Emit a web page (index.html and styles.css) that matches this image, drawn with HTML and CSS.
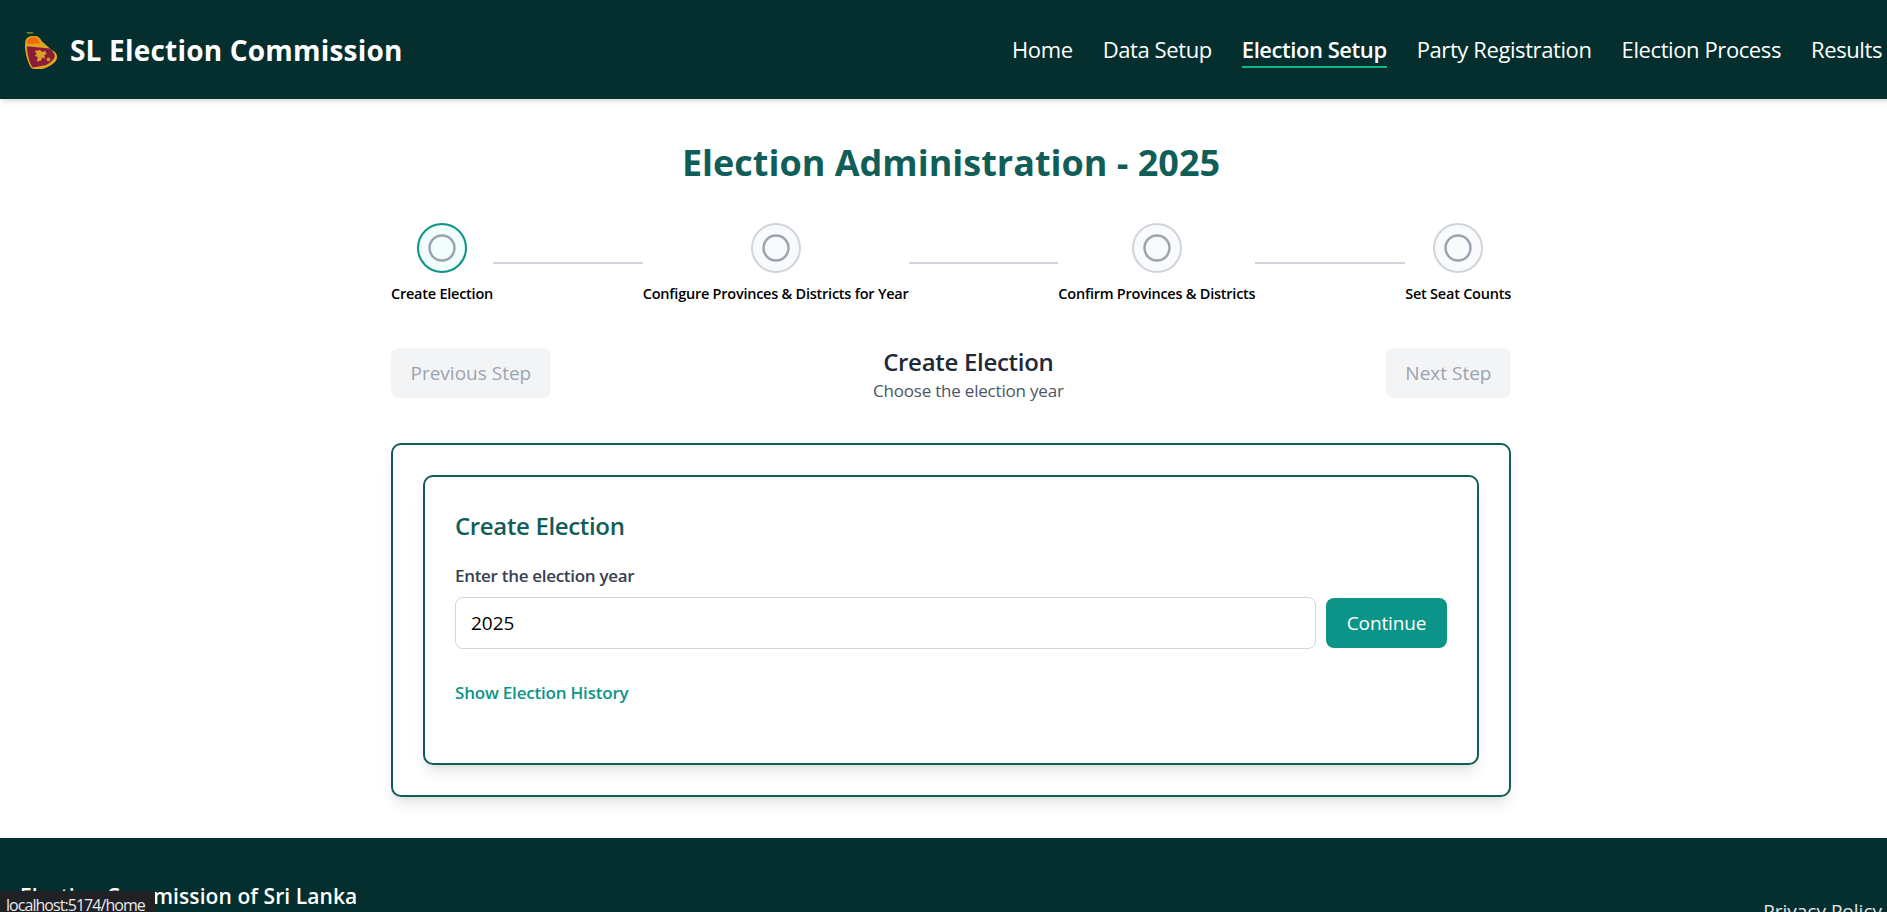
FILE: index.html
```html
<!DOCTYPE html>
<html lang="en">
<head>
<meta charset="utf-8">
<title>Election Administration - 2025</title>
<link rel="stylesheet" href="styles.css">
</head>
<body>
<div class="page">
  <header class="topbar">
    <a class="brand" href="#">
      <svg class="brand-logo" viewBox="0 0 34 36" aria-hidden="true">
        <g filter="url(#soft)">
          <path d="M4 1h7l-1 1.500H5z" fill="#6f7f2a"/>
          <path d="M3 11C3 7 7 4 11 5c4-1 6 2 8 5 3 3 7 6 9 8 3 1 6 4 5 8-1 4-6 7-11 9-5 2-12 2-14-1C5 29 2 18 3 11z" fill="#e0a51f"/>
          <path d="M4.500 11C5.500 7 8 6 11 6c3 0 5 2 6 6L5 12z" fill="#ee6a0c"/>
          <path d="M4.500 14.500l21.500 2c3 2 5 5 5 8-1 3-4 6-9 8l-12 2C7 31 5 22 4.500 14.500z" fill="#8a1c38"/>
          <path d="M12 19l5-1 2 2 3-1 1 3-2 1 1 3-3-1-1 3-4 1 1-4-3-2 2-1z" fill="#d9a128"/>
          <circle cx="25" cy="27" r="1.800" fill="#c98d2a"/>
        </g>
        <defs><filter id="soft"><feGaussianBlur stdDeviation="0.35"/></filter></defs>
      </svg>
      <span class="brand-name">SL Election Commission</span>
    </a>
    <nav class="mainnav">
      <a href="#">Home</a>
      <a href="#">Data Setup</a>
      <a href="#" class="is-active">Election Setup</a>
      <a href="#">Party Registration</a>
      <a href="#">Election Process</a>
      <a href="#">Results</a>
    </nav>
  </header>

  <main class="content">
    <h1 class="page-title">Election Administration - 2025</h1>

    <ol class="stepper">
      <li class="step is-current">
        <span class="step-dot"><svg viewBox="0 0 24 24"><circle cx="12" cy="12" r="10"/></svg></span>
        <span class="step-label">Create Election</span>
      </li>
      <li class="step-line"></li>
      <li class="step">
        <span class="step-dot"><svg viewBox="0 0 24 24"><circle cx="12" cy="12" r="10"/></svg></span>
        <span class="step-label">Configure Provinces &amp; Districts for Year</span>
      </li>
      <li class="step-line"></li>
      <li class="step">
        <span class="step-dot"><svg viewBox="0 0 24 24"><circle cx="12" cy="12" r="10"/></svg></span>
        <span class="step-label">Confirm Provinces &amp; Districts</span>
      </li>
      <li class="step-line"></li>
      <li class="step">
        <span class="step-dot"><svg viewBox="0 0 24 24"><circle cx="12" cy="12" r="10"/></svg></span>
        <span class="step-label">Set Seat Counts</span>
      </li>
    </ol>

    <div class="step-nav">
      <button class="ghost-btn" disabled>Previous Step</button>
      <div class="step-heading">
        <h2>Create Election</h2>
        <p>Choose the election year</p>
      </div>
      <button class="ghost-btn" disabled>Next Step</button>
    </div>

    <section class="panel">
      <div class="card">
        <h3 class="card-title">Create Election</h3>
        <label class="field-label" for="year">Enter the election year</label>
        <div class="field-row">
          <input id="year" class="field-input" type="text" value="2025">
          <button class="primary-btn">Continue</button>
        </div>
        <a class="history-link" href="#">Show Election History</a>
      </div>
    </section>
  </main>

  <footer class="pagefoot">
    <div class="foot-title">Election Commission of Sri Lanka</div>
    <div class="foot-links"><a href="#">Privacy Policy</a></div>
  </footer>
</div>
<div class="status-bubble">localhost:5174/home</div>
</body>
</html>
```

FILE: styles.css
```css
* { box-sizing: border-box; }
html, body { margin: 0; padding: 0; height: 912px; overflow: hidden; background: #fff; }
body { font-family: "Open Sans", "Noto Sans", sans-serif; color: #000; }
a { text-decoration: none; color: inherit; }
h1, h2, h3, p, ol { margin: 0; padding: 0; }

.page { width: 1902px; }

.topbar {
  height: 99px;
  padding: 0 20px;
  background: #042f2e;
  color: #fff;
  display: flex;
  align-items: center;
  justify-content: space-between;
  box-shadow: 0 4px 6px -1px rgba(0,0,0,.1), 0 2px 4px -2px rgba(0,0,0,.1);
  position: relative;
}
.brand { display: flex; align-items: center; gap: 12px; padding-left: 2px; }
.brand-logo { width: 36px; height: 38px; display: block; }
.brand-name { font-size: 28px; line-height: 36px; font-weight: 700; letter-spacing: 0.2px; }
.mainnav { display: flex; gap: 30px; }
.mainnav a { font-size: 22px; line-height: 28px; padding-bottom: 3px; border-bottom: 2px solid transparent; letter-spacing: -0.4px; margin-top: 3px; }
.mainnav a.is-active { font-weight: 600; border-bottom-color: #10b981; letter-spacing: -0.45px; }

.content { width: 1120px; margin: 0 auto; padding-top: 44px; }
.page-title { font-size: 36px; line-height: 40px; font-weight: 700; color: #115e59; text-align: center; }

.stepper { list-style: none; display: flex; margin-top: 40px; }
.step { display: flex; flex-direction: column; align-items: center; gap: 11px; }
.step-dot {
  width: 50px; height: 50px; border-radius: 50%;
  border: 2px solid #d1d5db; background: #f9fafb;
  display: flex; align-items: center; justify-content: center;
}
.step-dot svg { width: 30px; height: 30px; fill: none; stroke: #9ca3af; stroke-width: 2; }
.step.is-current .step-dot { border-color: #0d9488; background: #f0fdfa; }
.step-label { font-size: 14.5px; line-height: 20px; font-weight: 600; white-space: nowrap; letter-spacing: -0.24px; }
.step-line { flex: 1; height: 2px; margin-top: 39px; background: #d1d5db; }

.step-nav { display: flex; justify-content: space-between; align-items: flex-start; height: 50px; margin-top: 44px; }
.ghost-btn {
  height: 50px; padding: 0 19.5px; border: 0; border-radius: 8px;
  background: #f3f4f6; color: #9ca3af; font: inherit; font-size: 19px;
}
.step-heading { text-align: center; }
.step-heading h2 { font-size: 24px; line-height: 28px; font-weight: 600; color: #1f2937; letter-spacing: -0.3px; }
.step-heading p { margin-top: 3px; font-size: 17px; line-height: 24px; color: #4b5563; letter-spacing: -0.2px; }

.panel {
  margin-top: 45px; padding: 30px; height: 354px;
  border: 2px solid #115e59; border-radius: 10px; background: #fff;
  box-shadow: 0 10px 15px -3px rgba(0,0,0,.1), 0 4px 6px -4px rgba(0,0,0,.1);
}
.card {
  height: 290px; padding: 33px 30px 30px;
  border: 2px solid #115e59; border-radius: 10px; background: #fff;
  box-shadow: 0 10px 15px -3px rgba(0,0,0,.1), 0 4px 6px -4px rgba(0,0,0,.1);
}
.card-title { font-size: 24px; line-height: 32px; font-weight: 600; color: #115e59; letter-spacing: -0.35px; }
.field-label { display: block; margin-top: 22px; font-size: 17px; line-height: 24px; font-weight: 600; color: #374151; letter-spacing: -0.3px; }
.field-row { display: flex; align-items: center; gap: 10px; margin-top: 9px; }
.field-input {
  flex: 1; height: 52px; padding: 0 15px;
  border: 1px solid #d1d5db; border-radius: 8px;
  font: inherit; font-size: 19px; color: #000; outline: none;
}
.primary-btn {
  width: 121px; height: 50px; border: 0; border-radius: 8px;
  background: #0d9488; color: #fff; font: inherit; font-size: 19px; letter-spacing: -0.15px;
}
.history-link { display: inline-block; margin-top: 32px; font-size: 17px; line-height: 24px; font-weight: 600; color: #0d9488; letter-spacing: -0.2px; }

.pagefoot {
  margin-top: 41px; height: 200px; padding: 44px 20px 0;
  background: #042f2e; color: #fff;
  display: flex; justify-content: space-between; align-items: flex-start;
}
.foot-title { font-size: 21px; line-height: 28px; font-weight: 600; letter-spacing: 0.08px; }
.foot-links { margin-top: 15px; font-size: 19px; line-height: 28px; color: #e5e7eb; }

.status-bubble {
  position: fixed; left: 0; bottom: 0; width: 155px; height: 21px; overflow: hidden;
  padding: 4px 0 0 6px;
  background: #202124; color: #e8eaed; border-top-right-radius: 3px;
  font-size: 16px; line-height: 20px; letter-spacing: -0.95px; white-space: nowrap;
}
```
